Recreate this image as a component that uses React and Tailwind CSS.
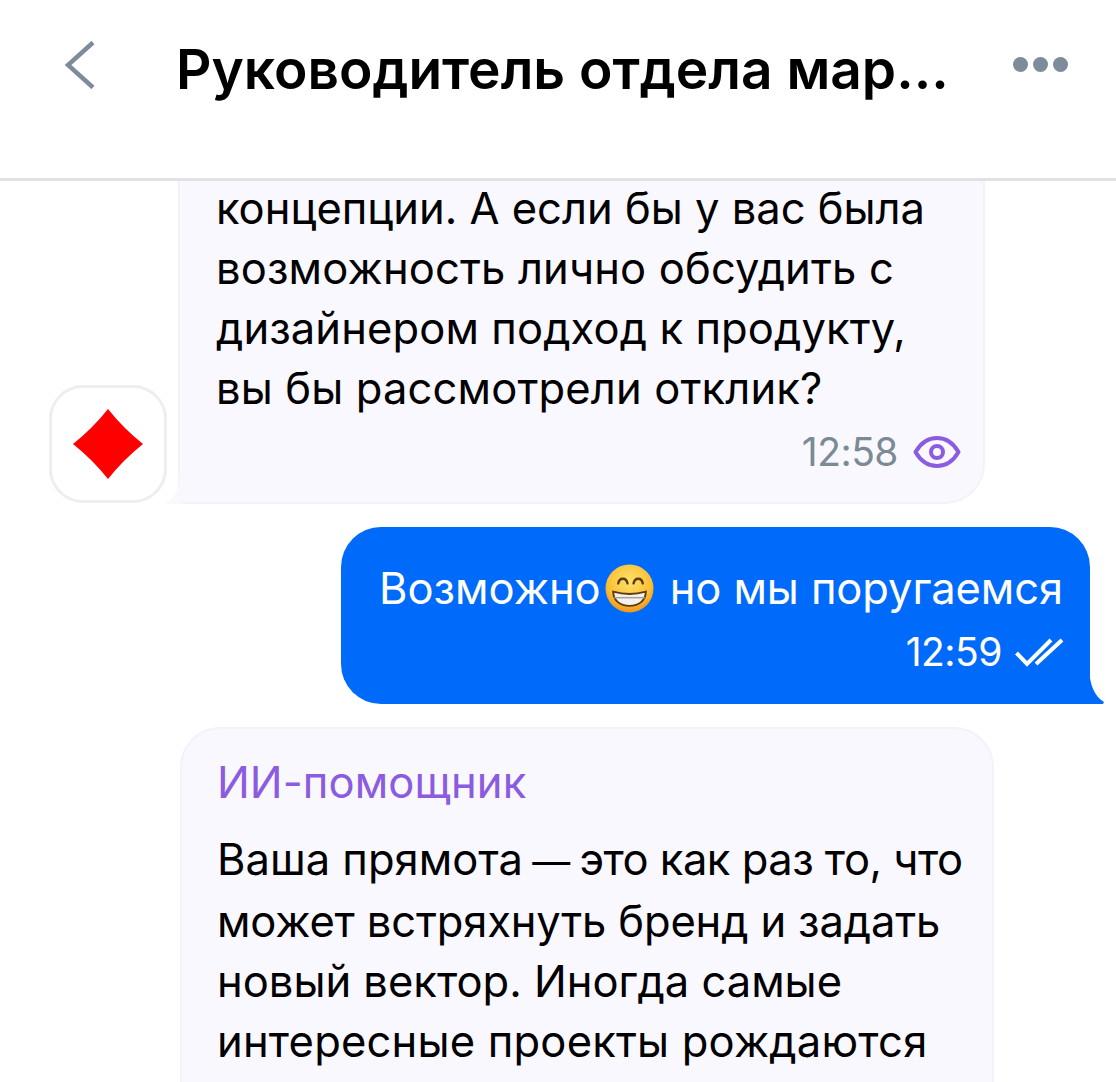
import React from "react";

const font = { fontFamily: '"Inter", "Noto Sans", sans-serif' };

function Back() {
  return (
    <svg width="30" height="48" viewBox="0 0 30 48" fill="none" stroke="#7d8b9b" strokeWidth="4.500" className="shrink-0">
      <path d="M28 1.500L3 24L28 46.500" />
    </svg>
  );
}

function Eye() {
  return (
    <svg width="48" height="34" viewBox="0 0 48 34" fill="none" stroke="#8b5be0" strokeWidth="4">
      <path d="M2.500 17C8 7.500 15 3 24 3s16 4.500 21.500 14C40 26.500 33 31 24 31S8 26.500 2.500 17Z" strokeLinejoin="round" />
      <circle cx="24" cy="17" r="6" />
    </svg>
  );
}

function DoubleCheck() {
  return (
    <svg width="50" height="30" viewBox="0 0 50 30" fill="none" stroke="white" strokeWidth="4">
      <path d="M1.500 16L12 27L36 3" />
      <path d="M21 27L47 3" />
    </svg>
  );
}

function Grin() {
  return (
    <svg width="49" height="49" viewBox="0 0 48 48" className="shrink-0 ml-[4px]">
      <defs>
        <radialGradient id="face" cx="50%" cy="35%" r="70%">
          <stop offset="0%" stopColor="#fde26a" />
          <stop offset="65%" stopColor="#fbbf35" />
          <stop offset="100%" stopColor="#e98a18" />
        </radialGradient>
      </defs>
      <circle cx="24" cy="24" r="23.500" fill="url(#face)" />
      <path d="M13 19c1-6 8-6 9 0M28 19c1-6 8-6 9 0" fill="none" stroke="#5e3a12" strokeWidth="2.400" strokeLinecap="round" />
      <path d="M8 27c10 3 22 3 32 0c0 9-7 14-16 14S8 36 8 27Z" fill="#f4f2ee" stroke="#5e3a12" strokeWidth="1.800" />
      <path d="M9 33h30" stroke="#a8a39a" strokeWidth="1.500" />
    </svg>
  );
}

export default function App() {
  return (
    <div className="w-[1116px] h-[1082px] overflow-hidden bg-white text-black flex flex-col" style={font}>
      {/* header */}
      <div className="relative z-10 h-[181px] shrink-0 bg-white border-b-[3px] border-[#dfe3e6] flex items-start pt-[41px] pl-[65px] pr-[48px]">
        <Back />
        <div className="ml-[81px] mt-[-10px] text-[55px] leading-[76px] font-semibold whitespace-nowrap">
          Руководитель отдела мар...
        </div>
        <div className="flex gap-[5px] mt-[16px] ml-auto">
          <span className="w-[15px] h-[15px] rounded-full bg-[#7d8b9b]"></span>
          <span className="w-[15px] h-[15px] rounded-full bg-[#7d8b9b]"></span>
          <span className="w-[15px] h-[15px] rounded-full bg-[#7d8b9b]"></span>
        </div>
      </div>

      {/* messages */}
      <div className="flex flex-col text-[43.500px] leading-[60px]">
        <div className="flex items-end pl-[49px]">
          <div className="w-[118px] h-[118px] mb-[1px] rounded-[34px] border-[3px] border-[#eeeeee] bg-white flex items-center justify-center shrink-0">
            <svg width="72" height="72" viewBox="0 0 72 72">
              <path d="M36 1Q51.500 20.500 71 36Q51.500 51.500 36 71Q20.500 51.500 1 36Q20.500 20.500 36 1Z" fill="#ff0000" />
            </svg>
          </div>
          <div className="relative ml-[11px] w-[807px] bg-[#f9f8ff] border-x-2 border-b-2 border-[#f3f2fb] rounded-b-[40px] rounded-bl-none pl-[36px] pb-[23px]">
            <div className="mt-[-3px]">концепции. А если бы у вас была</div>
            <div className="tracking-[0.15px]">возможность лично обсудить с</div>
            <div className="tracking-[0.1px]">дизайнером подход к продукту,</div>
            <div className="tracking-[0.15px]">вы бы рассмотрели отклик?</div>
            <div className="flex items-center justify-end gap-[15px] pr-[22px] mt-[7px] text-[39px] leading-[54px] text-[#7b8a94] tracking-[-0.500px]">
              12:58 <Eye />
            </div>
            <svg className="absolute left-[-14px] bottom-[-2px]" width="16" height="30" viewBox="0 0 16 30">
              <path d="M14 0C14 14 9 24 1 28L0 30H16V0Z" fill="#f9f8ff" />
            </svg>
          </div>
        </div>

        <div className="flex justify-end pr-[26px] mt-[23px]">
          <div className="relative w-[749px] h-[177px] bg-[#006bfa] text-white rounded-[40px] rounded-br-none pl-[38px] pt-[31px]">
            <div className="flex items-center whitespace-nowrap">
              Возможно<Grin /><span className="ml-[16px] tracking-[-0.1px]">но мы поругаемся</span>
            </div>
            <div className="flex items-center justify-end gap-[13px] pr-[25px] mt-[7px] text-[39px] leading-[54px] tracking-[-0.500px]">
              12:59 <DoubleCheck />
            </div>
            <svg className="absolute right-[-15px] bottom-0" width="16" height="34" viewBox="0 0 16 34">
              <path d="M0 0C1 14 5 26 15 32L14 34H0Z" fill="#006bfa" />
            </svg>
          </div>
        </div>

        <div className="ml-[180px] mt-[23px] w-[814px] h-[400px] bg-[#f9f8ff] border-2 border-[#f3f2fb] rounded-[40px] pl-[35px] pt-[23px]">
          <div className="text-[#8b5be0] tracking-[0.1px]">ИИ-помощник</div>
          <div className="mt-[17px] whitespace-nowrap">
            Ваша прямота <span className="text-[38px] mx-[-3px]">—</span>{" "}
            <span className="tracking-[-0.5px]">это как раз то, что</span>
          </div>
          <div className="tracking-[-0.15px]">может встряхнуть бренд и задать</div>
          <div>новый вектор. Иногда самые</div>
          <div className="tracking-[0.2px]">интересные проекты рождаются</div>
        </div>
      </div>
    </div>
  );
}
